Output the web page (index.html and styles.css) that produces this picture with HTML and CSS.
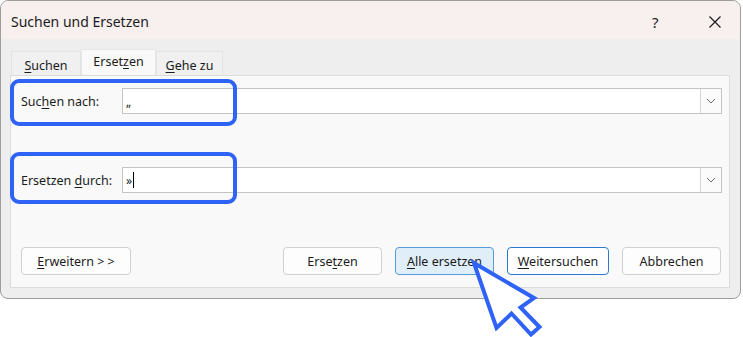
FILE: index.html
```html
<!DOCTYPE html>
<html lang="de">
<head>
    <meta charset="UTF-8">
    <title>Suchen und Ersetzen</title>
    <link rel="stylesheet" href="styles.css">
</head>
<body>

<div class="dialog">
    <div class="titlebar">
        <span class="title">Suchen und Ersetzen</span>
        <div class="title-buttons">
            <span class="help">?</span>
            <span class="close">
                <svg width="14" height="14" viewBox="0 0 14 14"><path d="M1.5 1.5 L12.5 12.5 M12.5 1.5 L1.5 12.5" stroke="#1c1c1c" stroke-width="1.2" fill="none"/></svg>
            </span>
        </div>
    </div>

    <div class="tabs">
        <div class="tab"><u>S</u>uchen</div>
        <div class="tab active">Erset<u>z</u>en</div>
        <div class="tab"><u>G</u>ehe zu</div>
    </div>

    <div class="panel">
        <!-- Suchen nach -->
        <div class="field-row row-find">
            <label>Suc<u>h</u>en nach:</label>
            <div class="combo">
                <span class="combo-text">„</span>
                <span class="combo-arrow">
                    <svg width="10" height="6" viewBox="0 0 10 6"><path d="M1 1 L5 5 L9 1" stroke="#6b6b6b" stroke-width="1" fill="none"/></svg>
                </span>
            </div>
            <div class="highlight"></div>
        </div>

        <!-- Ersetzen durch -->
        <div class="field-row row-replace">
            <label>Ersetzen <u>d</u>urch:</label>
            <div class="combo">
                <span class="combo-text">»<span class="caret"></span></span>
                <span class="combo-arrow">
                    <svg width="10" height="6" viewBox="0 0 10 6"><path d="M1 1 L5 5 L9 1" stroke="#6b6b6b" stroke-width="1" fill="none"/></svg>
                </span>
            </div>
            <div class="highlight"></div>
        </div>

        <div class="button-row">
            <button class="btn btn-wide"><u>E</u>rweitern &gt; &gt;</button>
            <div class="button-group">
                <button class="btn">Erse<u>t</u>zen</button>
                <button class="btn btn-hover"><u>A</u>lle ersetzen</button>
                <button class="btn btn-default"><u>W</u>eitersuchen</button>
                <button class="btn">Abbrechen</button>
            </div>
        </div>
    </div>
</div>

<!-- Mauszeiger -->
<svg class="cursor" width="90" height="82" viewBox="0 0 90 82">
    <polygon points="14,8 36.5,73 51.5,58.5 71,79.5 79.5,72 60.5,52.5 74,43" fill="#fff" stroke="#2f63f6" stroke-width="4" stroke-linejoin="miter"/>
</svg>

</body>
</html>
```

FILE: styles.css
```css
body {
    margin: 0;
    background: #fff;
    font-family: "Noto Sans", Arial, sans-serif;
    color: #1b1b1b;
    position: relative;
    width: 743px;
    height: 337px;
    overflow: hidden;
}
u {
    text-decoration-thickness: 1px;
    text-underline-offset: 2px;
}
.dialog {
    width: 739px;
    height: 297px;
    border: 1px solid #9d9d9d;
    border-radius: 8px;
    background: #eeeeee;
    overflow: hidden;
    box-sizing: content-box;
}
.titlebar {
    height: 38px;
    background: #f7f0ef;
    display: flex;
    align-items: center;
    justify-content: space-between;
    padding-left: 10px;
}
.title {
    font-size: 14px;
    margin-top: 2px;
}
.title-buttons {
    display: flex;
    align-items: center;
    margin-top: 3px;
}
.help {
    font-size: 15px;
    width: 10px;
    margin-right: 46px;
}
.close {
    display: flex;
    margin-right: 18px;
}
.tabs {
    display: flex;
    align-items: flex-end;
    height: 26px;
    margin: 10px 0 0 10px;
}
.tab {
    height: 24px;
    box-sizing: border-box;
    border: 1px solid #e3e3e3;
    border-bottom: none;
    background: #f0f0f0;
    font-size: 12.5px;
    display: flex;
    align-items: center;
    justify-content: center;
    padding-top: 3px;
}
.tab:nth-child(1) { width: 70px; }
.tab:nth-child(2) { width: 75px; }
.tab:nth-child(3) { width: 67px; }
.tab.active {
    height: 26px;
    background: #f9f9f9;
    border-color: #e6e6e6;
    padding-top: 0;
    padding-bottom: 2px;
}
.panel {
    margin-left: 9px;
    width: 720px;
    height: 213px;
    box-sizing: border-box;
    border: 1px solid #dcdcdc;
    background: #f9f9f9;
    padding: 12px 7px 0 10px;
}
.field-row {
    position: relative;
    display: flex;
    align-items: center;
    height: 26px;
}
.row-replace {
    margin-top: 53px;
}
.field-row label {
    width: 101px;
    font-size: 12.5px;
}
.combo {
    flex: 1;
    height: 26px;
    box-sizing: border-box;
    border: 1px solid #c4c4c4;
    background: #fff;
    display: flex;
    align-items: center;
    justify-content: space-between;
}
.combo-text {
    font-size: 12px;
    padding-left: 3px;
    display: flex;
    align-items: center;
}
.caret {
    display: inline-block;
    width: 1px;
    height: 16px;
    background: #000;
    margin-left: 1px;
}
.combo-arrow {
    width: 21px;
    height: 24px;
    box-sizing: border-box;
    border-left: 1px solid #d6d6d6;
    background: #fbfbfb;
    display: flex;
    align-items: center;
    justify-content: center;
}

/* Blaue Markierung um Beschriftung */
.highlight {
    position: absolute;
    left: -11px;
    top: -9px;
    width: 227px;
    height: 47px;
    box-sizing: border-box;
    border: 4px solid #2f63f6;
    border-radius: 9px;
}
.row-replace .highlight {
    top: -15px;
    height: 52px;
}

.button-row {
    margin-top: 54px;
    display: flex;
    justify-content: space-between;
    padding-right: 1px;
}
.button-group {
    display: flex;
    gap: 13px;
}
.btn {
    height: 28px;
    width: 99px;
    box-sizing: border-box;
    border: 1px solid #d0d0d0;
    border-radius: 4px;
    background: #fdfdfd;
    font-family: "Noto Sans", Arial, sans-serif;
    font-size: 12.5px;
    color: #1b1b1b;
    padding: 0;
}
.btn-wide {
    width: 110px;
}
.btn-hover {
    background: #e0eef9;
    border-color: #5a9ad8;
}
.btn-default {
    width: 102px;
    background: #fff;
    border-color: #2a7ad0;
}

.cursor {
    position: absolute;
    left: 460px;
    top: 255px;
}
```
